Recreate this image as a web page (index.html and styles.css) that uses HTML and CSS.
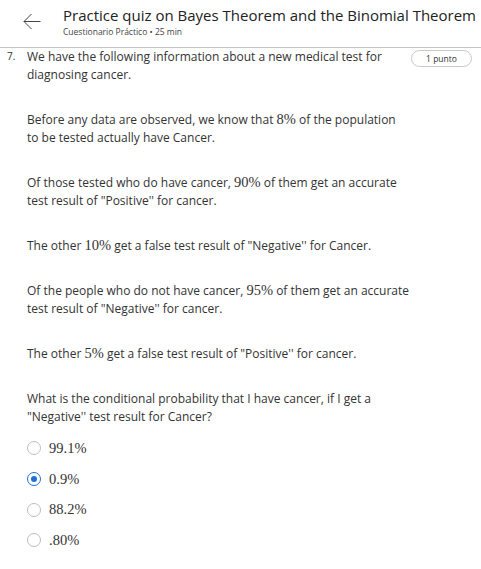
FILE: index.html
```html
<!DOCTYPE html>
<html>
<head>
<meta charset="utf-8">
<link rel="stylesheet" href="styles.css">
</head>
<body>
<header class="header">
  <svg class="back" width="18" height="17" viewBox="0 0 18 17"><path d="M17.5 8.5H1M8.5 1L1 8.5l7.5 7.5" fill="none" stroke="#444" stroke-width="1"/></svg>
  <div class="titles">
    <div class="title">Practice quiz on Bayes Theorem and the Binomial Theorem</div>
    <div class="subtitle">Cuestionario Práctico • 25 min</div>
  </div>
</header>
<main class="question">
  <div class="num">7.</div>
  <div class="body">
    <p>We have the following information about a new medical test for diagnosing cancer.</p>
    <p>Before any data are observed, we know that <span class="m">8%</span> of the population to be tested actually have Cancer.</p>
    <p>Of those tested who do have cancer, <span class="m">90%</span> of them get an accurate test result of "Positive'' for cancer.</p>
    <p>The other <span class="m">10%</span> get a false test result of "Negative'' for Cancer.</p>
    <p>Of the people who do not have cancer, <span class="m">95%</span> of them get an accurate test result of "Negative'' for cancer.</p>
    <p>The other <span class="m">5%</span> get a false test result of "Positive'' for cancer.</p>
    <p class="last">What is the conditional probability that I have cancer, if I get a "Negative'' test result for Cancer?</p>
    <div class="options">
      <label class="opt"><span class="radio"></span><span class="m">99.1%</span></label>
      <label class="opt"><span class="radio on"></span><span class="m">0.9%</span></label>
      <label class="opt"><span class="radio"></span><span class="m">88.2%</span></label>
      <label class="opt"><span class="radio"></span><span class="m">.80%</span></label>
    </div>
  </div>
  <div class="pill">1 punto</div>
</main>
</body>
</html>
```
FILE: styles.css
```css
* { box-sizing: border-box; }
body {
  margin: 0;
  background: #fff;
  font-family: "Open Sans", "Noto Sans", sans-serif;
  color: #333;
}
.header {
  display: flex;
  align-items: flex-start;
  height: 48px;
  border-bottom: 1px solid #c4c4c4;
  padding: 5px 0 0 23px;
}
.back { margin-top: 8px; margin-right: 22px; }
.title {
  font-size: 15px;
  line-height: 20px;
  color: #222;
  white-space: nowrap;
}
.subtitle {
  font-size: 8.5px;
  line-height: 12px;
  color: #444;
  margin-top: 1px;
}
.question {
  display: flex;
  align-items: flex-start;
  padding: 0 0 0 7px;
}
.num {
  width: 20px;
  font-size: 10px;
  line-height: 14px;
  padding-top: 1px;
  color: #333;
}
.body {
  width: 382px;
  margin-right: 2px;
  font-size: 12px;
  line-height: 18px;
  padding-top: 0;
  color: #333;
}
.body p { margin: 0 0 27px; }
.body p.last { margin-bottom: 7px; }
.m {
  font-family: "Liberation Serif", "DejaVu Serif", serif;
  font-size: 14.5px;
  line-height: 1;
}
.pill {
  margin-top: 2px;
  width: 61px;
  height: 17px;
  border: 1px solid #c8c8c8;
  border-radius: 9px;
  font-size: 8.5px;
  line-height: 15px;
  text-align: center;
  color: #333;
}
.options { display: flex; flex-direction: column; }
.opt {
  display: flex;
  align-items: center;
  height: 30.7px;
  gap: 8px;
}
.opt .m { font-size: 14.5px; color: #333; }
.radio {
  width: 14px;
  height: 14px;
  border: 1.5px solid #bdbdbd;
  border-radius: 50%;
  position: relative;
  flex: none;
}
.radio.on { border: 1.5px solid #1f6fd6; }
.radio.on::after {
  content: "";
  position: absolute;
  left: 2.5px; top: 2.5px;
  width: 6px; height: 6px;
  border-radius: 50%;
  background: #1f6fd6;
}
```
